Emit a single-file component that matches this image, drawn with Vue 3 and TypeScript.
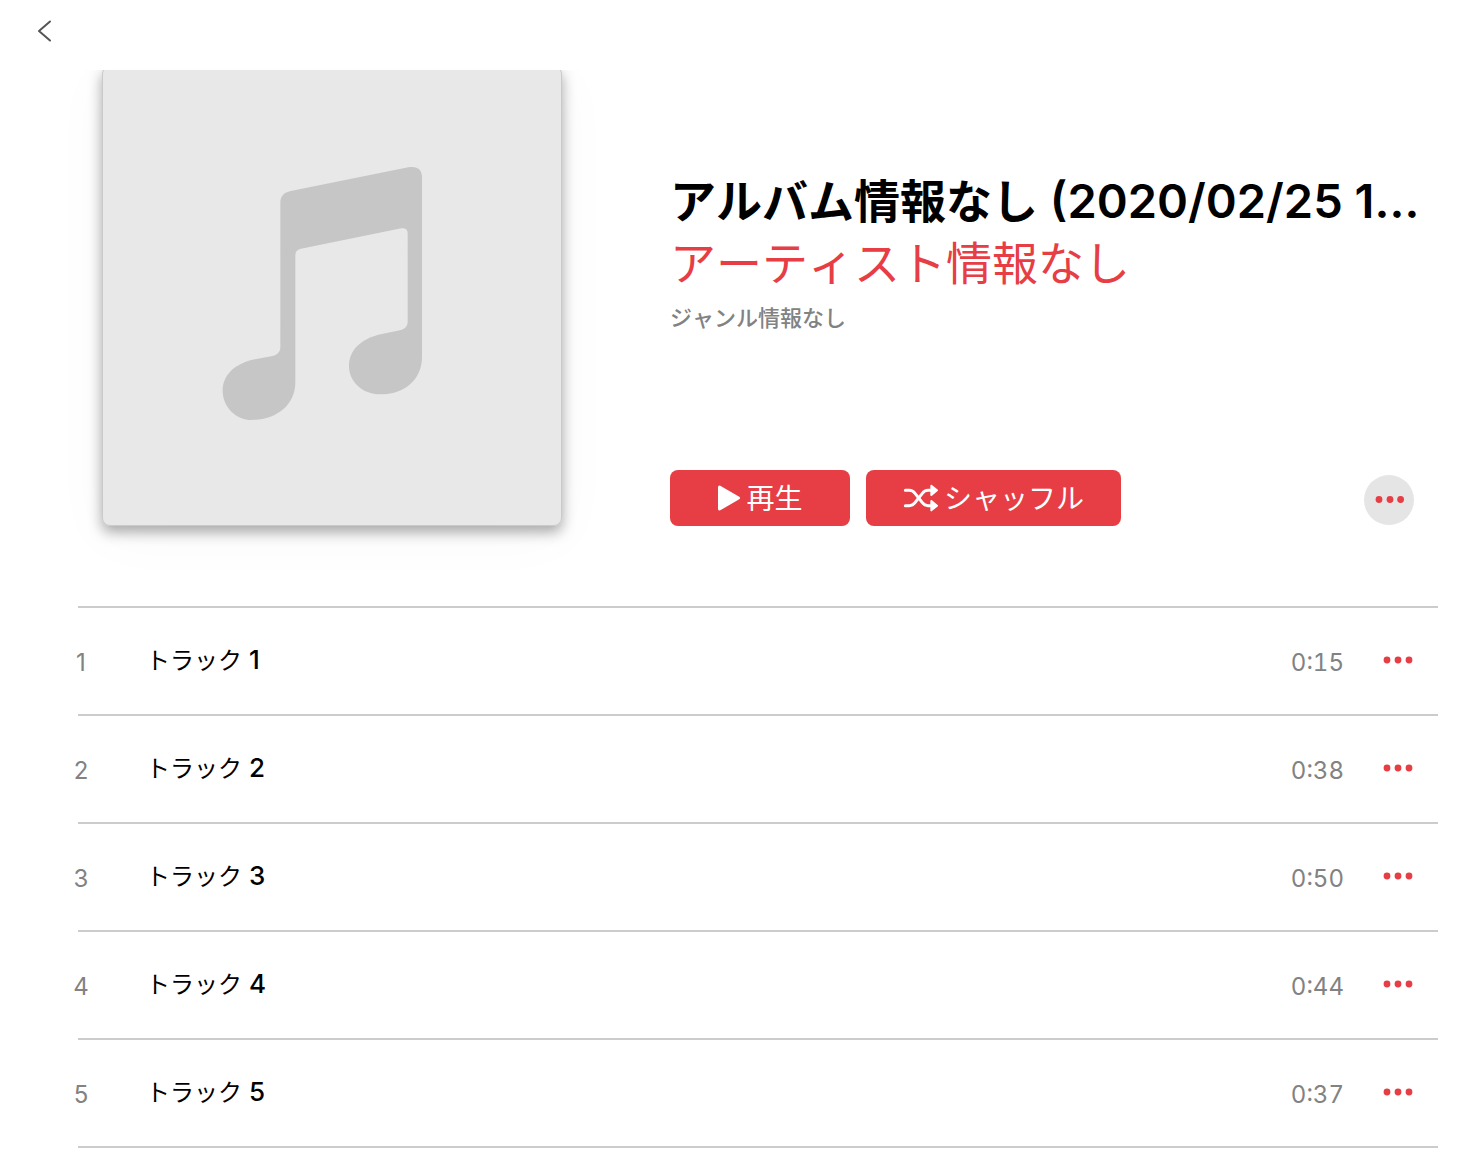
<script setup lang="ts">
interface Track {
  no: number
  title: string
  time: string
}

const tracks: Track[] = [
  { no: 1, title: 'トラック', time: '0:15' },
  { no: 2, title: 'トラック', time: '0:38' },
  { no: 3, title: 'トラック', time: '0:50' },
  { no: 4, title: 'トラック', time: '0:44' },
  { no: 5, title: 'トラック', time: '0:37' },
]
</script>

<template>
  <div class="page">
    <nav class="topbar">
      <button class="back" type="button">
        <svg width="16" height="24" viewBox="0 0 16 24">
          <path d="M14 2.500 3 12 14 21.500" transform="translate(0 0)" fill="none" stroke="#555" stroke-width="2" stroke-linecap="round" stroke-linejoin="round" />
        </svg>
      </button>
    </nav>

    <main>
      <section class="album">
        <div class="art">
          <svg viewBox="0 0 460 460">
            <path
              transform="translate(98 84) scale(.33333)"
              fill="#c6c6c6"
              d="M241 158C241 139 252 127 272 123L625 52C650 47 666 57 666 82V620C666 688 615 733 540 733C487 733 447 695 447 648C447 598 486 567 535 554L600 541C615 537 623 528 623 515V250C623 238 616 233 604 235L303 296C290 299 286 306 286 318V697C286 765 230 810 155 810C107 810 68 770 68 722C68 675 105 640 165 628L218 618C232 615 241 605 241 592Z"
            />
          </svg>
        </div>

        <div class="info">
          <h1 class="title"><span class="title-ja">アルバム情報なし</span> (2020/02/25 1…</h1>
          <a class="artist" href="#">アーティスト情報なし</a>
          <p class="genre">ジャンル情報なし</p>

          <div class="actions">
            <button class="action play" type="button">
              <svg width="24" height="28" viewBox="0 0 24 28">
                <path d="M2.500 3 21.500 14 2.500 25Z" fill="#fff" stroke="#fff" stroke-width="3" stroke-linejoin="round" />
              </svg>
              <span>再生</span>
            </button>
            <button class="action shuffle" type="button">
              <svg width="36" height="28" viewBox="735 73 108 84">
                <g fill="none" stroke="#fff" stroke-width="9" stroke-linecap="round">
                  <path d="M742 92H754Q764 92 771 101L793 129Q800 138 810 138H818" />
                  <path d="M742 138H754Q764 138 771 129L793 101Q800 92 810 92H818" />
                </g>
                <g fill="#fff" stroke="#fff" stroke-width="6" stroke-linejoin="round">
                  <path d="M820 78 837 92 820 106Z" />
                  <path d="M820 124 837 138 820 152Z" />
                </g>
              </svg>
              <span>シャッフル</span>
            </button>
            <button class="more" type="button">
              <svg width="30" height="8" viewBox="0 0 30 8">
                <circle cx="5" cy="3.500" r="3.400" /><circle cx="16" cy="3.500" r="3.400" /><circle cx="26.600" cy="3.500" r="3.400" />
              </svg>
            </button>
          </div>
        </div>
      </section>

      <table class="tracks">
        <tbody>
          <tr v-for="t in tracks" :key="t.no">
            <td class="no"><span>{{ t.no }}</span></td>
            <th class="name" scope="row"><span>{{ t.title }}</span> {{ t.no }}</th>
            <td class="time">{{ t.time }}</td>
            <td class="menu">
              <button type="button">
                <svg width="30" height="8" viewBox="0 0 30 8">
                  <circle cx="4" cy="4" r="3.400" /><circle cx="15" cy="4" r="3.400" /><circle cx="26" cy="4" r="3.400" />
                </svg>
              </button>
            </td>
          </tr>
        </tbody>
      </table>
    </main>
  </div>
</template>

<style>
body {
  background: #fff;
}
</style>

<style scoped>
.page {
  font-family: Inter, "Noto Sans CJK JP", sans-serif;
  color: #000;
}

button {
  margin: 0;
  padding: 0;
  border: 0;
  background: none;
  font: inherit;
  cursor: pointer;
}

svg {
  display: block;
}

.topbar {
  display: flex;
  align-items: flex-start;
  height: 70px;
  padding: 15px 32px 0;
  box-sizing: border-box;
}

.back {
  display: grid;
  place-items: center;
  width: 24px;
  height: 32px;
}

.album {
  display: flex;
  gap: 108px;
  padding: 0 60px 80px 102px;
  overflow: hidden;
}

.art {
  flex: none;
  width: 460px;
  height: 460px;
  margin-top: -4px;
  border-radius: 8px;
  background: #e8e8e8;
  box-shadow:
    inset 0 0 0 1px #cacaca,
    0 6px 14px rgba(0, 0, 0, 0.34),
    0 10px 60px rgba(0, 0, 0, 0.03);
}

.info {
  flex: 1;
  min-width: 0;
  display: flex;
  flex-direction: column;
  align-items: flex-start;
  padding-top: 100px;
}

.title {
  max-width: 100%;
  margin: 0;
  font-size: 47px;
  font-weight: 600;
  line-height: 62px;
  white-space: nowrap;
}

.title-ja {
  font-size: 46px;
}

.title-ja,
.artist,
.genre,
.name span {
  font-kerning: none;
}

.artist {
  color: #e63e44;
  font-size: 46px;
  line-height: 62px;
  text-decoration: none;
}

.genre {
  margin: 8px 0 0;
  color: #828282;
  font-size: 22px;
  font-weight: 500;
  line-height: 32px;
}

.actions {
  display: flex;
  align-items: flex-end;
  gap: 16px;
  width: 100%;
  margin-top: auto;
}

.action {
  display: flex;
  align-items: center;
  justify-content: center;
  gap: 5px;
  height: 56px;
  border-radius: 8px;
  background: #e63e44;
  color: #fff;
  font-size: 28px;
  line-height: 54px;
}

.action span {
  padding-top: 2px;
}

.play {
  width: 180px;
}

.shuffle {
  width: 255px;
}

.more {
  display: grid;
  place-items: center;
  width: 50px;
  height: 50px;
  margin: 0 0 1px auto;
  border-radius: 50%;
  background: #e5e5e5;
}

.more svg,
.menu svg {
  fill: #e63e44;
}

.tracks {
  width: calc(100% - 114px);
  margin-left: 78px;
  border-spacing: 0;
}

td,
th {
  height: 106px;
  padding: 0;
  border-top: 2px solid #ccc;
}

tr:last-child > * {
  border-bottom: 2px solid #ccc;
}

.no,
.time {
  padding-top: 2px;
  height: 104px;
  color: #828282;
  font-size: 24px;
}

.no {
  width: 68px;
}

.no span {
  display: block;
  width: 16px;
  margin-left: -5px;
  text-align: center;
}

.name {
  height: 100px;
  padding-bottom: 6px;
  font-size: 26px;
  font-weight: 500;
  text-align: left;
}

.name span {
  font-size: 24px;
  font-weight: 400;
}

.time {
  width: 100px;
  text-align: right;
  font-variant-numeric: tabular-nums;
}

.menu {
  height: 104px;
  padding-bottom: 2px;
  width: 94px;
}

.menu button {
  display: grid;
  place-items: center;
  width: 60px;
  height: 48px;
  margin-left: 24px;
}
</style>
